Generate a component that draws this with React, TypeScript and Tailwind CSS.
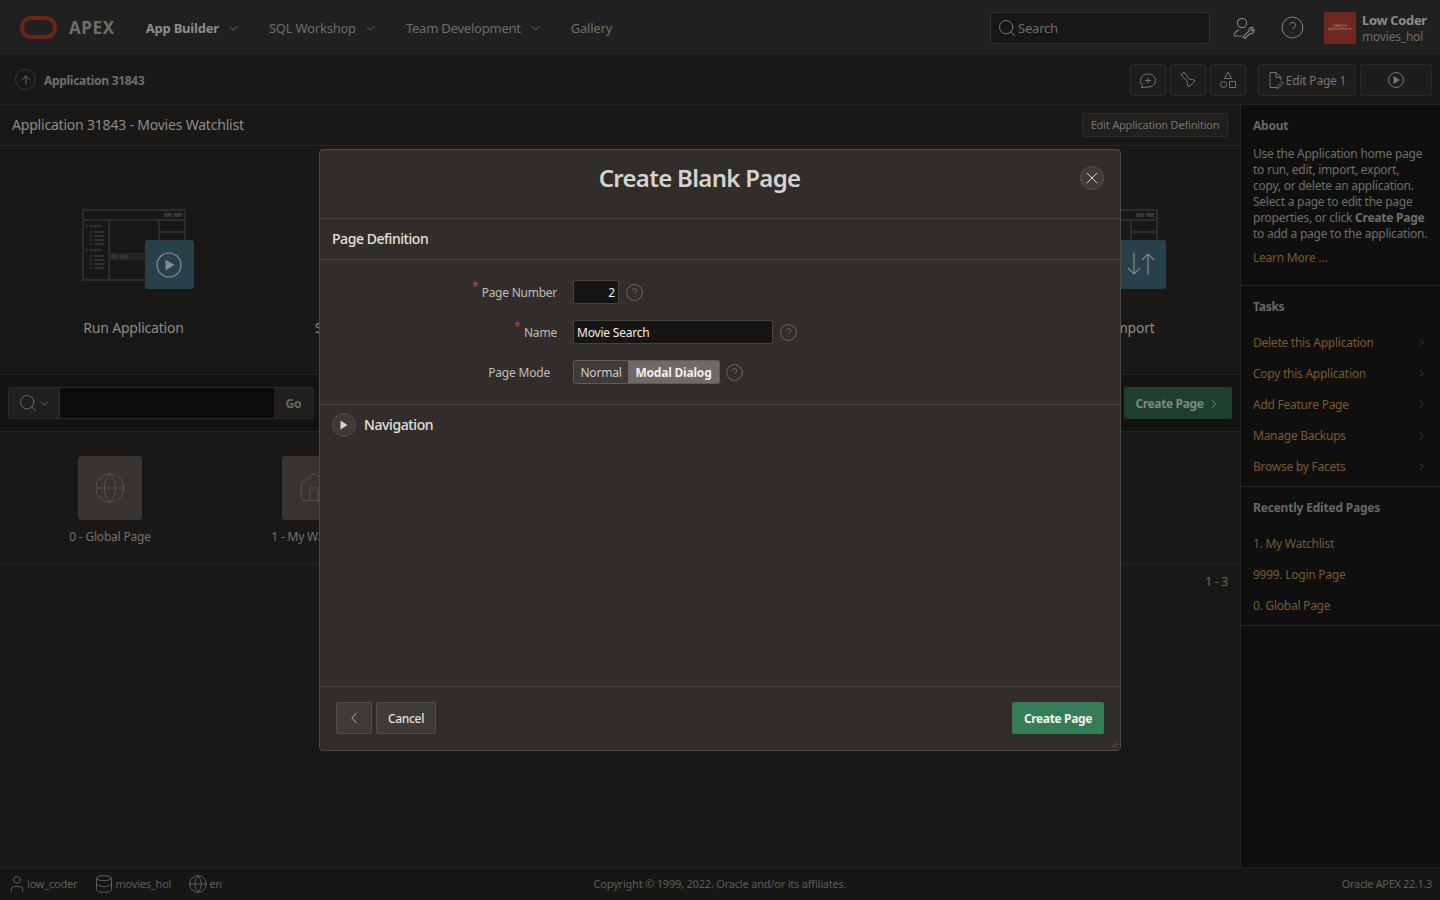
import {
  ArrowUp,
  ChevronDown,
  ChevronLeft,
  ChevronRight,
  CircleHelp,
  Database,
  Globe,
  House,
  Search,
  User,
  X,
} from 'lucide-react';

const font = { fontFamily: '"Noto Sans", "Open Sans", sans-serif' };

const NAV = [
  { label: 'SQL Workshop', caret: true },
  { label: 'Team Development', caret: true },
  { label: 'Gallery', caret: false },
];

const TASKS = ['Delete this Application', 'Copy this Application', 'Add Feature Page', 'Manage Backups', 'Browse by Facets'];
const RECENT = ['1. My Watchlist', '9999. Login Page', '0. Global Page'];
// the two middle tiles sit fully behind the dialog
const TILES = ['Run Application', 'Supporting Objects', '', '', 'Export / Import'];

function Wireframe() {
  return (
    <svg width="104" height="72" viewBox="0 0 104 72" fill="none" stroke="#2f2d2b" strokeWidth="2">
      <rect x="1" y="1" width="102" height="70" />
      <path d="M1 11h102M27 11v60M77 11v33M77 23h26" />
      <rect x="27" y="44" width="76" height="7" fill="#262422" stroke="none" />
      <rect x="28" y="45" width="8" height="5" fill="#33312f" stroke="none" />
      <rect x="38" y="45" width="8" height="5" fill="#33312f" stroke="none" />
      <path d="M82 6h8M92 6h8" strokeWidth="4" stroke="#383633" />
      <path
        d="M4 17h2M8 17h12M8 23h2M12 23h10M8 27h2M12 27h10M8 31h2M12 31h10M8 35h2M12 35h10M4 41h2M8 41h12M8 47h2M12 47h10M8 51h2M12 51h10M8 55h2M12 55h10M8 59h2M12 59h10"
        strokeWidth="1.4"
        stroke="#3a3835"
      />
    </svg>
  );
}

function RunTile({ label, index }: { label: string; index: number }) {
  if (!label) return <div className="w-[243px] shrink-0" />;
  return (
    <div className="flex w-[243px] shrink-0 flex-col items-center pt-[63px]">
      <div className="relative h-[80px] w-[104px]">
        <Wireframe />
        <div className="absolute left-[63px] top-[31px] flex h-[49px] w-[49px] items-center justify-center rounded-[3px] bg-[#27404a] text-[#8b8985]">
          {index === 4 ? (
            <svg width="28" height="24" viewBox="0 0 28 24" fill="none" stroke="currentColor" strokeWidth="1.2" className="-mt-[2px]">
              <path d="M7 1v21M1 16l6 6 6-6M21 23V2M15 8l6-6 6 6" />
            </svg>
          ) : (
            <svg width="26" height="26" viewBox="0 0 26 26" fill="none" stroke="currentColor" strokeWidth="1.2">
              <circle cx="13" cy="13" r="12" />
              <path d="M9.500 7.500 18.500 13 9.500 18.500Z" fill="currentColor" stroke="none" />
            </svg>
          )}
        </div>
      </div>
      <div className="mt-[29px] text-[14px] leading-5 text-[#8e8c88]">{label}</div>
    </div>
  );
}

function ToolButton({ children, className }: { children: React.ReactNode; className: string }) {
  return (
    <div className={`flex h-8 items-center justify-center rounded-[2px] border border-[#2b2a29] bg-[#1e1d1c] text-[#76746f] ${className}`}>
      {children}
    </div>
  );
}

function HelpIcon() {
  return <CircleHelp size={19} strokeWidth={1} absoluteStrokeWidth className="text-[#6f6c68]" />;
}

function PageTile({ label, icon }: { label: string; icon: React.ReactNode }) {
  return (
    <div className="flex w-[204px] shrink-0 flex-col items-center">
      <div className="flex h-16 w-16 items-center justify-center rounded-[4px] bg-[#373432] text-[#55524f]">{icon}</div>
      <div className="mt-[9px] text-[12px] leading-4 text-[#74726e]">{label}</div>
    </div>
  );
}

function Modal() {
  return (
    <div className="absolute left-[319px] top-[149px] flex h-[602px] w-[802px] flex-col rounded-[4px] border border-[#4b4845] bg-[#312d2a]">
      <div className="relative flex h-[69px] shrink-0 items-center justify-center border-b border-[#45423f] pb-[13px] pr-[41px]">
        <span className="text-[24px] font-semibold leading-8 tracking-[-0.7px] text-[#d5d3d0]">Create Blank Page</span>
        <div className="absolute right-[16px] top-[16px] flex h-6 w-6 items-center justify-center rounded-full border border-[#55524f] bg-[#3d3a37] text-[#d5d3d0]">
          <X size={20} strokeWidth={1} absoluteStrokeWidth />
        </div>
      </div>
      <div className="flex h-[41px] shrink-0 items-center border-b border-[#45423f] px-3 pb-[2px] text-[14px] font-medium tracking-[-0.45px] text-[#e4e2df]">Page Definition</div>

      <div className="flex h-[145px] shrink-0 flex-col gap-[16px] border-b border-[#45423f] pt-[20px]">
        <div className="flex h-6 items-center">
          <label className="relative w-[237px] pt-px text-right text-[12px] tracking-[-0.25px] text-[#c0bdb9]">
            <span className="absolute left-[152px] -top-[5px] text-[12px] text-[#c74634]">*</span>
            Page Number
          </label>
          <div className="ml-[16px] flex h-6 w-[46px] items-center justify-end rounded-[2px] border border-[#45423f] bg-[#161513] pr-[3px] pt-[2px] text-[12px] text-[#f1efed]">2</div>
          <div className="ml-[6px] flex"><HelpIcon /></div>
        </div>
        <div className="flex h-6 items-center">
          <label className="relative w-[237px] pt-px text-right text-[12px] text-[#c0bdb9]">
            <span className="absolute left-[194px] -top-[5px] text-[12px] text-[#c74634]">*</span>
            Name
          </label>
          <div className="ml-[16px] flex h-6 w-[200px] items-center rounded-[2px] border border-[#45423f] bg-[#161513] pl-[3px] pt-[2px] text-[12px] text-[#f1efed]">Movie Search</div>
          <div className="ml-[6px] flex"><HelpIcon /></div>
        </div>
        <div className="flex h-6 items-center">
          <label className="w-[230px] pt-px text-right text-[12px] text-[#c0bdb9]">Page Mode</label>
          <div className="ml-[23px] flex h-6 items-stretch overflow-hidden rounded-[2px] border border-[#5f5b57] text-[12px]">
            <span className="flex w-[54px] items-center justify-center bg-[#3d3a37] pt-[2px] text-[#d0cecb]">Normal</span>
            <span className="flex w-[91px] items-center justify-center bg-[#6f6a66] pt-[2px] font-bold text-[#f1efed]">Modal Dialog</span>
          </div>
          <div className="ml-[5px] flex"><HelpIcon /></div>
        </div>
      </div>

      <div className="flex h-[40px] shrink-0 items-center gap-[8px] px-3">
        <div className="flex h-6 w-6 items-center justify-center rounded-full border border-[#55524f] bg-[#3d3a37]">
          <svg width="8" height="10" viewBox="0 0 8 10" fill="#d5d3d0"><path d="M0.500 0.500 7.500 5 0.500 9.500Z" /></svg>
        </div>
        <span className="-mt-[2px] text-[14px] font-medium tracking-[-0.4px] text-[#e4e2df]">Navigation</span>
      </div>

      <div className="flex-1 border-b border-[#45423f]" />

      <div className="relative flex h-[63px] shrink-0 items-center justify-between px-4 pb-px">
        <div className="flex gap-1">
          <div className="flex h-8 w-9 items-center justify-center rounded-[2px] border border-[#4f4c49] bg-[#3d3a37] text-[#c0bdb9]">
            <ChevronLeft size={18} strokeWidth={1} absoluteStrokeWidth />
          </div>
          <div className="flex h-8 w-[60px] items-center justify-center rounded-[2px] border border-[#4f4c49] bg-[#3d3a37] pt-[2px] text-[12px] font-medium tracking-[-0.3px] text-[#e4e2df]">Cancel</div>
        </div>
        <div className="flex h-8 w-[92px] items-center justify-center rounded-[2px] bg-[#367c56] pt-[2px] text-[12px] font-bold tracking-[-0.35px] text-[#f5f4f2]">Create Page</div>
        <svg width="7" height="7" viewBox="0 0 7 7" className="absolute bottom-[2px] right-[2px]" stroke="#55524f"><path d="M0 7 7 0M3 7l4-4" /></svg>
      </div>
    </div>
  );
}

export default function App() {
  return (
    <div className="relative flex h-[900px] w-[1440px] flex-col overflow-hidden bg-[#191817] tracking-[-0.2px]" style={font}>
      <header className="flex h-[55px] shrink-0 items-center bg-[#202020]">
        <div className="ml-5 h-[23px] w-[37px] rounded-[11px] border-[4px] border-[#6b231b]" />
        <span className="ml-[12px] pt-px text-[17px] font-bold tracking-[0.6px] text-[#706e6a]">APEX</span>
        <div className="ml-[31px] flex items-center pt-[2px] text-[13px] font-bold tracking-[-0.2px] text-[#8f8d89]">
          App Builder
          <ChevronDown size={13} strokeWidth={1} absoluteStrokeWidth className="ml-[8px] text-[#6a6864]" />
        </div>
        {NAV.map((item) => (
          <div key={item.label} className="ml-[29px] flex items-center pt-[2px] text-[13px] tracking-[-0.22px] text-[#706e6a]">
            {item.label}
            {item.caret && <ChevronDown size={13} strokeWidth={1} absoluteStrokeWidth className="ml-[8px] text-[#6a6864]" />}
          </div>
        ))}
        <div className="ml-auto flex h-8 w-[220px] items-center rounded-[3px] border border-[#333231] bg-[#171716] pl-[6px] text-[13px] text-[#706e6a]">
          <Search size={20} strokeWidth={1} absoluteStrokeWidth className="mr-px text-[#7a7874]" />
          <span className="pt-[2px]">Search</span>
        </div>
        <svg width="24" height="24" viewBox="0 0 24 24" fill="none" stroke="#84827e" strokeWidth="1.1" className="ml-[22px]">
          <circle cx="10" cy="7" r="4.600" />
          <path d="M2 20c0-3 2-5 5-6M2 20h8" />
          <path d="m11 21 6-6c-.7-2 1-4.400 4-3.500l-2 2 1 1.500 2-1.500c.5 3-2 5-4 4l-5 5z" />
        </svg>
        <CircleHelp size={25} strokeWidth={1} absoluteStrokeWidth className="ml-[24px] text-[#84827e]" />
        <div className="ml-[19px] flex h-8 w-8 flex-col items-center justify-center rounded-[2px] bg-[#6e2a20] text-[4px] leading-[4px] text-[#a87f78]">
          <span>ORACLE</span>
          <span className="text-[3px] leading-[3px]">Application Express</span>
        </div>
        <div className="ml-[6px] w-[78px] pt-px text-[12px] leading-4">
          <div className="text-[13px] font-bold tracking-[-0.35px] text-[#8f8d89]">Low Coder</div>
          <div className="mt-px text-[#706e6a]">movies_hol</div>
        </div>
      </header>

      <div className="flex h-[50px] shrink-0 items-center border-b border-[#252423] bg-[#181818] pl-[15px] pr-2">
        <div className="flex h-[21px] w-[21px] items-center justify-center rounded-full border border-[#27404a] text-[#6a6864]">
          <ArrowUp size={14} strokeWidth={1} absoluteStrokeWidth />
        </div>
        <span className="ml-[8px] pt-[2px] text-[12px] font-bold tracking-[-0.3px] text-[#706e6a]">Application 31843</span>
        <div className="ml-auto flex items-center gap-[4px]">
          <ToolButton className="w-9">
            <svg width="18" height="18" viewBox="0 0 18 18" fill="none" stroke="currentColor" strokeWidth="1">
              <path d="M2.500 16.500h3.500l1-.6c4.500 1 9.500-1.500 9.500-6.400 0-3.800-3.400-6.500-7.500-6.500S1.500 5.700 1.500 9.500c0 1.900.8 3.500 2 4.500z" />
              <path d="M9 6.500v6M6 9.500h6" />
            </svg>
          </ToolButton>
          <ToolButton className="w-9">
            <svg width="18" height="18" viewBox="0 0 18 18" fill="none" stroke="currentColor" strokeWidth="1">
              <path d="M5 1 2 4l6 6 1 5 1 1 6-6-1-1-5-1z" />
            </svg>
          </ToolButton>
          <ToolButton className="w-9">
            <svg width="18" height="18" viewBox="0 0 18 18" fill="none" stroke="currentColor" strokeWidth="1">
              <path d="M9 1 12.500 7.500h-7zM10.500 10.500h6v6h-6z" />
              <circle cx="4.500" cy="13.500" r="3" />
            </svg>
          </ToolButton>
          <ToolButton className="ml-[8px] w-[98px] text-[12px]">
            <svg width="16" height="18" viewBox="0 0 16 18" fill="none" stroke="currentColor" strokeWidth="1" className="mr-[2px]">
              <path d="M9 16.500H2V1.500h6l5 5v3M8 1.500v5h5M9 15.500l5-5 1.500 1.500-5 5-2 .5z" />
            </svg>
            <span className="pt-[2px]">Edit Page 1</span>
          </ToolButton>
          <ToolButton className="w-[72px]">
            <svg width="16" height="16" viewBox="0 0 16 16" fill="none" stroke="currentColor" strokeWidth="1">
              <circle cx="8" cy="8" r="7.500" />
              <path d="M5.500 4 12 8l-6.500 4z" fill="currentColor" stroke="none" />
            </svg>
          </ToolButton>
        </div>
      </div>

      <div className="flex min-h-0 flex-1">
        <main className="flex w-[1241px] shrink-0 flex-col border-r border-[#252423]">
          <div className="flex h-[41px] shrink-0 items-center justify-between border-b border-[#252423] pl-3 pr-3">
            <span className="-mt-[2px] text-[14px] text-[#8e8c88]">Application 31843 - Movies Watchlist</span>
            <div className="flex h-6 w-[146px] items-center justify-center rounded-[2px] border border-[#2f2d2c] bg-[#201f1e] text-[11px] text-[#76746f]">Edit Application Definition</div>
          </div>
          <div className="flex h-[229px] shrink-0 border-b border-[#252423] pl-3">
            {TILES.map((label, i) => (
              <RunTile key={i} label={label} index={i} />
            ))}
          </div>
          <div className="flex h-[57px] shrink-0 items-center justify-between border-b border-[#252423] bg-[#131312] px-2">
            <div className="flex h-8 w-[306px] overflow-hidden rounded-[2px] border border-[#2a2928]">
              <div className="flex w-[51px] items-center justify-center gap-0 border-r border-[#2f2e2d] bg-[#201f1e] text-[#6a6864]">
                <Search size={20} strokeWidth={1} absoluteStrokeWidth />
                <ChevronDown size={13} strokeWidth={1} absoluteStrokeWidth />
              </div>
              <div className="flex-1 bg-[#0c0b0a]" />
              <div className="flex w-[39px] items-center justify-center bg-[#201f1e] pt-px text-[12px] font-bold text-[#6a6864]">Go</div>
            </div>
            <div className="flex h-8 w-[108px] items-center justify-center gap-[3px] rounded-[2px] bg-[#1e3f2c] pt-px text-[12px] font-bold tracking-[-0.35px] text-[#7a8a80]">
              Create Page
              <ChevronRight size={14} strokeWidth={1} absoluteStrokeWidth />
            </div>
          </div>
          <div className="flex h-[133px] shrink-0 border-b border-[#252423] pl-2 pt-[24px]">
            <PageTile label="0 - Global Page" icon={<Globe size={34} strokeWidth={1} absoluteStrokeWidth />} />
            <PageTile label="1 - My Watchlist" icon={<House size={34} strokeWidth={1} absoluteStrokeWidth />} />
          </div>
          <div className="pr-3 pt-[7px] text-right text-[12px] leading-5 text-[#6a6864]">1 - 3</div>
        </main>

        <aside className="flex w-[199px] shrink-0 flex-col bg-[#0f0f0f] text-[12px] tracking-[-0.25px]">
          <section className="h-[181px] shrink-0 border-b border-[#262524] px-3 pt-[13px]">
            <h3 className="text-[12px] font-bold leading-4 text-[#6a6864]">About</h3>
            <p className="mt-[12px] whitespace-nowrap leading-4 text-[#706e6a]">
              Use the Application home page
              <br />
              to run, edit, import, export,
              <br />
              copy, or delete an application.
              <br />
              Select a page to edit the page
              <br />
              properties, or click <b>Create Page</b>
              <br />
              to add a page to the application.
            </p>
            <div className="mt-2 leading-4 text-[#7b5a2a]">Learn More ...</div>
          </section>
          <section className="h-[201px] shrink-0 border-b border-[#262524] pt-[13px]">
            <h3 className="px-3 font-bold leading-4 text-[#6a6864]">Tasks</h3>
            <div className="mt-[12px] flex flex-col">
              {TASKS.map((t) => (
                <div key={t} className="flex h-[31px] items-center justify-between pl-3 pr-[12px] text-[#7b5a2a]">
                  {t}
                  <ChevronRight size={13} strokeWidth={1} absoluteStrokeWidth className="text-[#3a3836]" />
                </div>
              ))}
            </div>
          </section>
          <section className="h-[139px] shrink-0 border-b border-[#262524] pt-[13px]">
            <h3 className="px-3 font-bold leading-4 tracking-[-0.2px] text-[#6a6864]">Recently Edited Pages</h3>
            <div className="mt-[12px] flex flex-col">
              {RECENT.map((t) => (
                <div key={t} className="flex h-[31px] items-center pl-3 text-[#7b5a2a]">{t}</div>
              ))}
            </div>
          </section>
        </aside>
      </div>

      <footer className="grid h-[33px] shrink-0 grid-cols-[1fr_auto_1fr] items-center border-t border-[#222120] bg-[#161615] px-2 text-[11px] text-[#5e5c59]">
        <div className="flex items-center">
          <User size={20} strokeWidth={1} absoluteStrokeWidth className="-ml-px" />
          low_coder
          <Database size={20} strokeWidth={1} absoluteStrokeWidth className="ml-[17px] mr-px" />
          movies_hol
          <Globe size={20} strokeWidth={1} absoluteStrokeWidth className="ml-[17px] mr-px" />
          en
        </div>
        <div className="text-center">Copyright © 1999, 2022, Oracle and/or its affiliates.</div>
        <div className="text-right tracking-[-0.35px]">Oracle APEX 22.1.3</div>
      </footer>

      <Modal />
    </div>
  );
}
